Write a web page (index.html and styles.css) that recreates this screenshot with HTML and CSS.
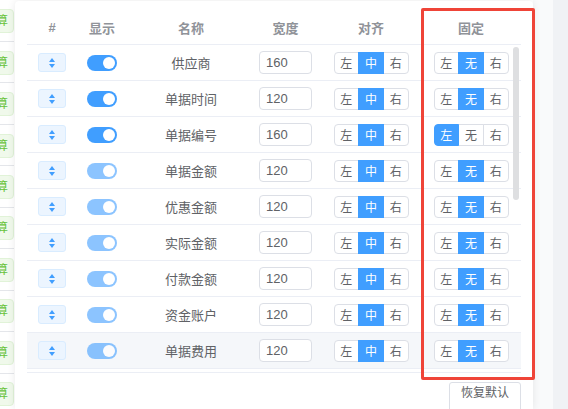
FILE: index.html
```html
<!DOCTYPE html>
<html lang="zh-CN">
<head>
<meta charset="utf-8">
<title>列设置</title>
<link rel="stylesheet" href="styles.css">
</head>
<body>
<div class="page">
  <div class="strip">
    <div class="strip-row"><span class="tag">结算</span></div>
    <div class="strip-row"><span class="tag">结算</span></div>
    <div class="strip-row"><span class="tag">结算</span></div>
    <div class="strip-row"><span class="tag">结算</span></div>
    <div class="strip-row"><span class="tag">结算</span></div>
    <div class="strip-row"><span class="tag">结算</span></div>
    <div class="strip-row"><span class="tag">结算</span></div>
    <div class="strip-row"><span class="tag">结算</span></div>
    <div class="strip-row"><span class="tag">结算</span></div>
    <div class="strip-row"><span class="tag">结算</span></div>
  </div>

  <div class="panel">
    <div class="table">
      <div class="tr thead">
        <div class="cell">#</div>
        <div class="cell">显示</div>
        <div class="cell">名称</div>
        <div class="cell">宽度</div>
        <div class="cell">对齐</div>
        <div class="cell">固定</div>
        <div class="cell"></div>
      </div>

      <div class="tr">
        <div class="cell"><span class="drag"><svg width="6" height="10" viewBox="0 0 6 10"><polygon points="3,0 6,4 0,4"/><polygon points="0,6 6,6 3,10"/></svg></span></div>
        <div class="cell"><span class="switch"><i></i></span></div>
        <div class="cell name">供应商</div>
        <div class="cell"><input class="num" type="text" value="160"></div>
        <div class="cell"><span class="seg"><span>左</span><span class="on">中</span><span>右</span></span></div>
        <div class="cell"><span class="seg"><span>左</span><span class="on">无</span><span>右</span></span></div>
        <div class="cell"></div>
      </div>

      <div class="tr">
        <div class="cell"><span class="drag"><svg width="6" height="10" viewBox="0 0 6 10"><polygon points="3,0 6,4 0,4"/><polygon points="0,6 6,6 3,10"/></svg></span></div>
        <div class="cell"><span class="switch"><i></i></span></div>
        <div class="cell name">单据时间</div>
        <div class="cell"><input class="num" type="text" value="120"></div>
        <div class="cell"><span class="seg"><span>左</span><span class="on">中</span><span>右</span></span></div>
        <div class="cell"><span class="seg"><span>左</span><span class="on">无</span><span>右</span></span></div>
        <div class="cell"></div>
      </div>

      <div class="tr">
        <div class="cell"><span class="drag"><svg width="6" height="10" viewBox="0 0 6 10"><polygon points="3,0 6,4 0,4"/><polygon points="0,6 6,6 3,10"/></svg></span></div>
        <div class="cell"><span class="switch"><i></i></span></div>
        <div class="cell name">单据编号</div>
        <div class="cell"><input class="num" type="text" value="160"></div>
        <div class="cell"><span class="seg"><span>左</span><span class="on">中</span><span>右</span></span></div>
        <div class="cell"><span class="seg"><span class="on">左</span><span>无</span><span>右</span></span></div>
        <div class="cell"></div>
      </div>

      <div class="tr">
        <div class="cell"><span class="drag"><svg width="6" height="10" viewBox="0 0 6 10"><polygon points="3,0 6,4 0,4"/><polygon points="0,6 6,6 3,10"/></svg></span></div>
        <div class="cell"><span class="switch disabled"><i></i></span></div>
        <div class="cell name">单据金额</div>
        <div class="cell"><input class="num" type="text" value="120"></div>
        <div class="cell"><span class="seg"><span>左</span><span class="on">中</span><span>右</span></span></div>
        <div class="cell"><span class="seg"><span>左</span><span class="on">无</span><span>右</span></span></div>
        <div class="cell"></div>
      </div>

      <div class="tr">
        <div class="cell"><span class="drag"><svg width="6" height="10" viewBox="0 0 6 10"><polygon points="3,0 6,4 0,4"/><polygon points="0,6 6,6 3,10"/></svg></span></div>
        <div class="cell"><span class="switch disabled"><i></i></span></div>
        <div class="cell name">优惠金额</div>
        <div class="cell"><input class="num" type="text" value="120"></div>
        <div class="cell"><span class="seg"><span>左</span><span class="on">中</span><span>右</span></span></div>
        <div class="cell"><span class="seg"><span>左</span><span class="on">无</span><span>右</span></span></div>
        <div class="cell"></div>
      </div>

      <div class="tr">
        <div class="cell"><span class="drag"><svg width="6" height="10" viewBox="0 0 6 10"><polygon points="3,0 6,4 0,4"/><polygon points="0,6 6,6 3,10"/></svg></span></div>
        <div class="cell"><span class="switch disabled"><i></i></span></div>
        <div class="cell name">实际金额</div>
        <div class="cell"><input class="num" type="text" value="120"></div>
        <div class="cell"><span class="seg"><span>左</span><span class="on">中</span><span>右</span></span></div>
        <div class="cell"><span class="seg"><span>左</span><span class="on">无</span><span>右</span></span></div>
        <div class="cell"></div>
      </div>

      <div class="tr">
        <div class="cell"><span class="drag"><svg width="6" height="10" viewBox="0 0 6 10"><polygon points="3,0 6,4 0,4"/><polygon points="0,6 6,6 3,10"/></svg></span></div>
        <div class="cell"><span class="switch disabled"><i></i></span></div>
        <div class="cell name">付款金额</div>
        <div class="cell"><input class="num" type="text" value="120"></div>
        <div class="cell"><span class="seg"><span>左</span><span class="on">中</span><span>右</span></span></div>
        <div class="cell"><span class="seg"><span>左</span><span class="on">无</span><span>右</span></span></div>
        <div class="cell"></div>
      </div>

      <div class="tr">
        <div class="cell"><span class="drag"><svg width="6" height="10" viewBox="0 0 6 10"><polygon points="3,0 6,4 0,4"/><polygon points="0,6 6,6 3,10"/></svg></span></div>
        <div class="cell"><span class="switch disabled"><i></i></span></div>
        <div class="cell name">资金账户</div>
        <div class="cell"><input class="num" type="text" value="120"></div>
        <div class="cell"><span class="seg"><span>左</span><span class="on">中</span><span>右</span></span></div>
        <div class="cell"><span class="seg"><span>左</span><span class="on">无</span><span>右</span></span></div>
        <div class="cell"></div>
      </div>

      <div class="tr hover">
        <div class="cell"><span class="drag"><svg width="6" height="10" viewBox="0 0 6 10"><polygon points="3,0 6,4 0,4"/><polygon points="0,6 6,6 3,10"/></svg></span></div>
        <div class="cell"><span class="switch disabled"><i></i></span></div>
        <div class="cell name">单据费用</div>
        <div class="cell"><input class="num" type="text" value="120"></div>
        <div class="cell"><span class="seg"><span>左</span><span class="on">中</span><span>右</span></span></div>
        <div class="cell"><span class="seg"><span>左</span><span class="on">无</span><span>右</span></span></div>
        <div class="cell"></div>
      </div>

      <div class="table-end"></div>
      <div class="thumb"></div>
    </div>

    <div class="footer">
      <button class="btn" type="button">恢复默认</button>
    </div>
  </div>

  <div class="gutter"></div>
  <div class="side"></div>
</div>
<div class="mark"></div>
</body>
</html>
```

FILE: styles.css
```css
html, body {
  margin: 0;
  padding: 0;
}
body {
  width: 568px;
  height: 409px;
  overflow: hidden;
  background: #ffffff;
  font-family: "Liberation Sans", "Noto Sans CJK SC", sans-serif;
  color: #606266;
  position: relative;
}
.page {
  display: flex;
  height: 409px;
}

/* underlying page strip on the left */
.strip {
  width: 14px;
  flex: none;
  overflow: hidden;
  padding-top: 0.6px;
  box-sizing: border-box;
}
.strip-row {
  height: 41.45px;
  box-sizing: border-box;
  border-bottom: 1px solid #e4e6ea;
  padding-top: 8.6px;
  display: flex;
  justify-content: flex-end;
}
.tag {
  flex: none;
  height: 24px;
  box-sizing: border-box;
  border: 1px solid #e1f3d8;
  background: #f0f9eb;
  color: #67c23a;
  font-size: 12px;
  line-height: 22px;
  padding: 0 5px 0 8px;
  border-radius: 4px;
  white-space: nowrap;
}

/* dialog panel */
.panel {
  width: 518px;
  flex: none;
  margin-left: 1px;
  margin-top: 1px;
  background: #ffffff;
  border-radius: 4px 4px 0 0;
  box-shadow: 0 0 8px rgba(0, 0, 0, 0.09);
  padding: 9px 12px 0 12px;
  box-sizing: border-box;
  position: relative;
  z-index: 1;
}
.table {
  position: relative;
  width: 494px;
}
.tr {
  display: grid;
  grid-template-columns: 50px 50px 128px 61px 110px 90px 5px;
  height: 36px;
  box-sizing: border-box;
  border-bottom: 1px solid #ebeef5;
  font-size: 13px;
}
.tr.hover {
  background: #f5f7fa;
}
.thead {
  height: 35px;
  color: #909399;
  font-weight: 700;
}
.cell {
  display: flex;
  align-items: center;
  justify-content: center;
  min-width: 0;
}
.name {
  color: #606266;
}
.table-end {
  margin-top: 3px;
  border-top: 1px solid #ebeef5;
}
.thumb {
  position: absolute;
  left: 486px;
  top: 37px;
  width: 6px;
  height: 153px;
  border-radius: 3px;
  background: #dedfe1;
}

/* drag handle */
.drag {
  width: 28px;
  height: 19px;
  box-sizing: border-box;
  border: 1px solid #d9ecff;
  background: #ecf5ff;
  border-radius: 3px;
  display: flex;
  align-items: center;
  justify-content: center;
}
.drag svg {
  fill: #409eff;
  display: block;
}

/* switch */
.switch {
  width: 30px;
  height: 16px;
  box-sizing: border-box;
  border-radius: 8px;
  background: #409eff;
  padding: 2px;
  display: flex;
  justify-content: flex-end;
}
.switch i {
  width: 12px;
  height: 12px;
  border-radius: 50%;
  background: #ffffff;
  display: block;
}
.switch.disabled {
  opacity: 0.6;
}

/* number input */
.num {
  width: 53px;
  height: 23px;
  box-sizing: border-box;
  border: 1px solid #dcdfe6;
  border-radius: 4px;
  padding: 0 6px;
  margin: 0;
  font-family: "Liberation Sans", "Noto Sans CJK SC", sans-serif;
  font-size: 13px;
  color: #606266;
  background: #ffffff;
  outline: none;
}

/* segmented buttons */
.seg {
  display: flex;
  width: 75px;
  height: 22px;
}
.seg span {
  flex: 1;
  box-sizing: border-box;
  border: 1px solid #dcdfe6;
  margin-left: -1px;
  display: flex;
  align-items: center;
  justify-content: center;
  font-size: 12px;
  color: #606266;
  background: #ffffff;
}
.seg span:first-child {
  margin-left: 0;
  border-radius: 4px 0 0 4px;
}
.seg span:last-child {
  border-radius: 0 4px 4px 0;
}
.seg span.on {
  background: #409eff;
  border-color: #409eff;
  color: #ffffff;
  position: relative;
  z-index: 1;
}

/* footer */
.footer {
  display: flex;
  justify-content: flex-end;
  margin-top: 9px;
}
.btn {
  width: 72px;
  height: 34px;
  box-sizing: border-box;
  border: 1px solid #dcdfe6;
  border-radius: 3px;
  background: #ffffff;
  color: #606266;
  font-family: "Liberation Sans", "Noto Sans CJK SC", sans-serif;
  font-size: 12px;
  line-height: 12px;
  padding: 4px 0 16px;
  margin: 0;
  display: flex;
  justify-content: center;
}

.gutter {
  width: 20px;
  flex: none;
  background: #f9fafb;
}
.side {
  flex: 1;
  background: #f0f2f5;
}

/* annotation frame */
.mark {
  position: absolute;
  left: 421px;
  top: 8px;
  width: 114px;
  height: 372px;
  box-sizing: border-box;
  border: 3px solid #ef4438;
  border-radius: 2px;
  z-index: 5;
}
```
